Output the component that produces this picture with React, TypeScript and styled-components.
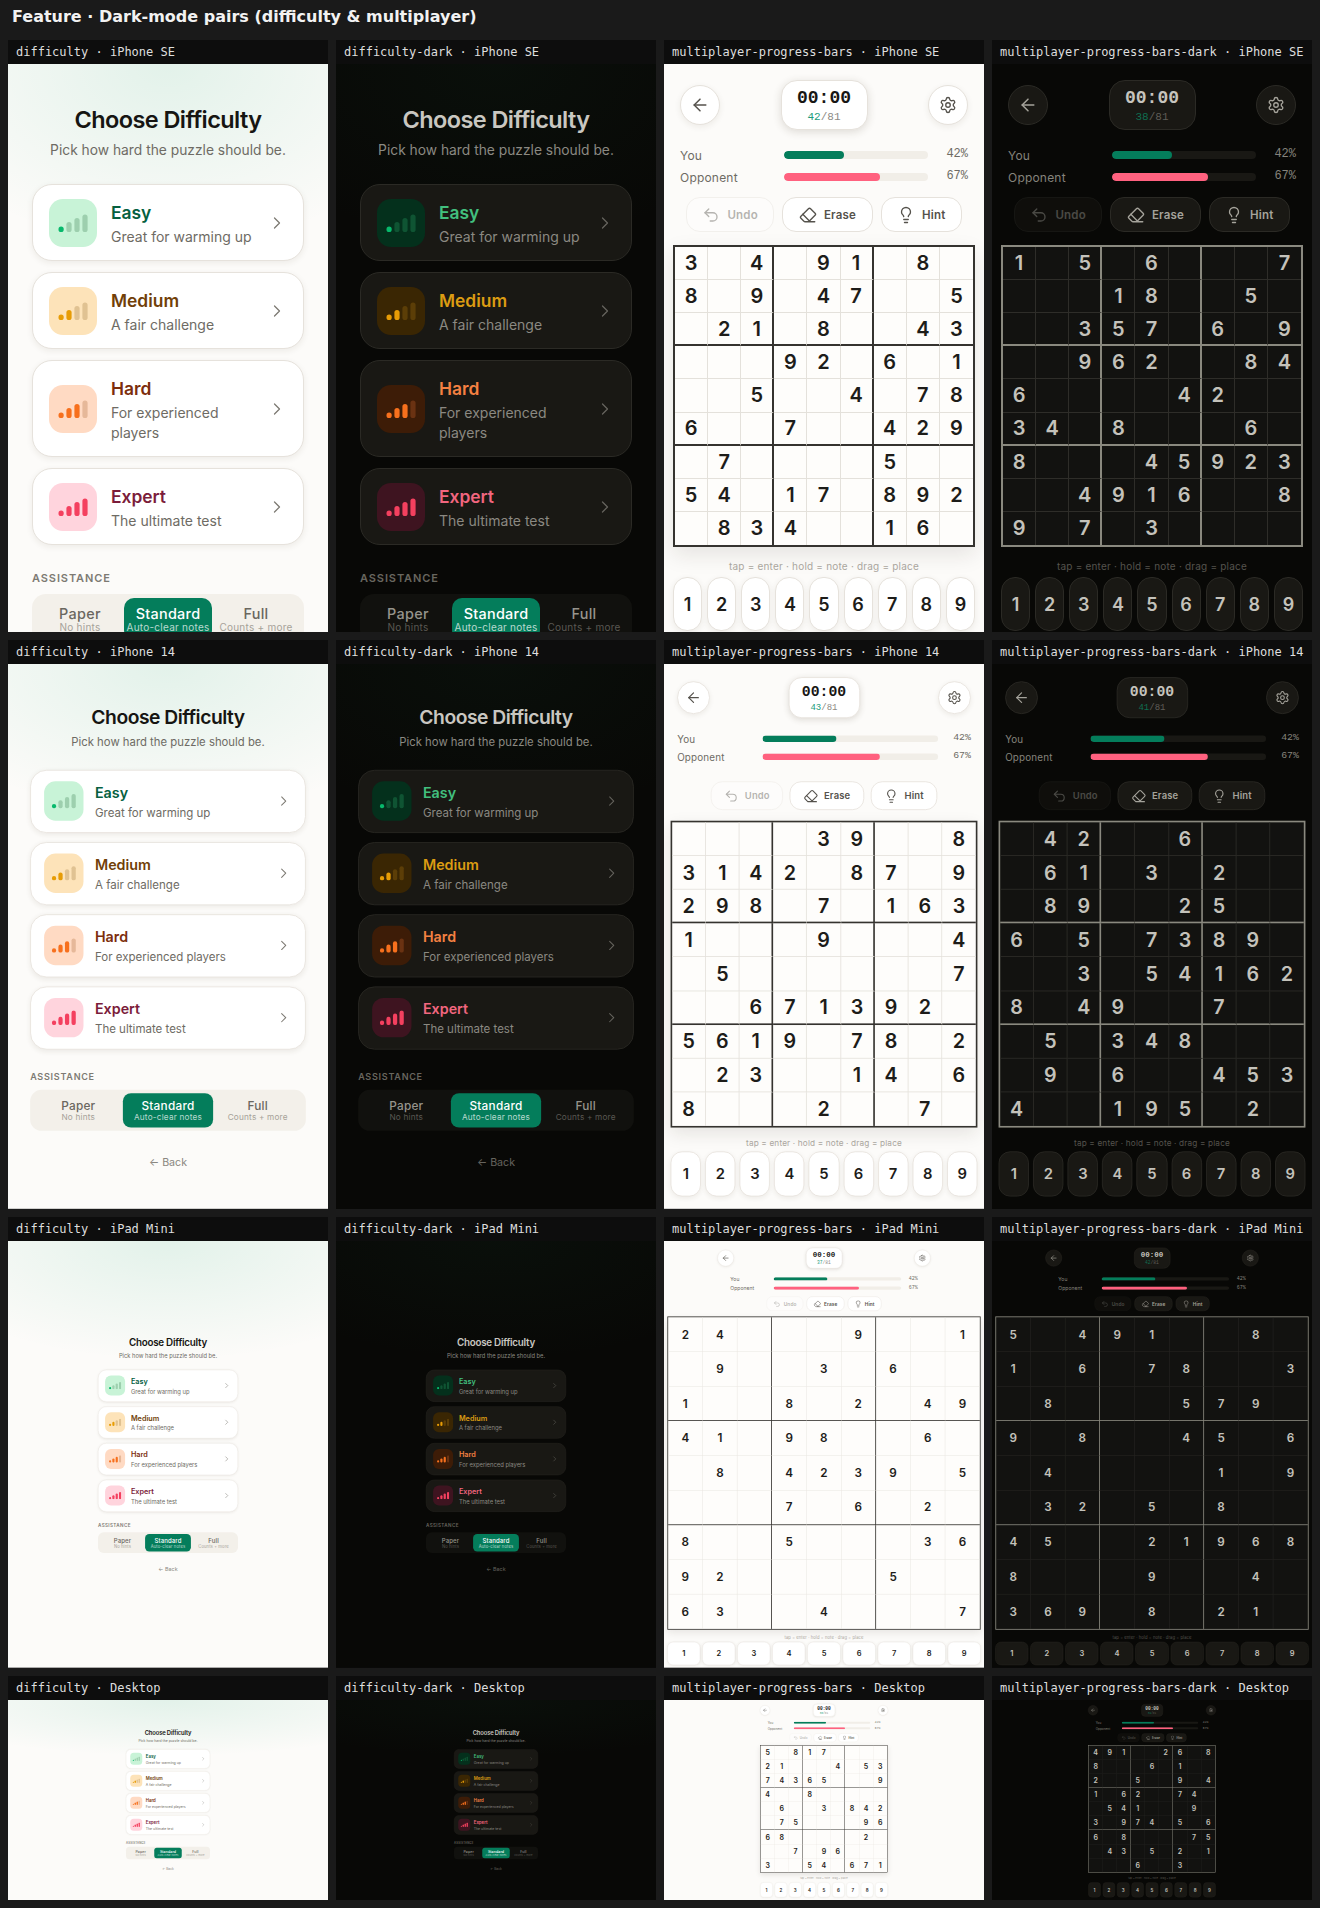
// Dark-mode pairs contact sheet: four screens, four device sizes
import * as React from 'react'
import styled, { createGlobalStyle, ThemeProvider } from 'styled-components'
import { ArrowLeft, ChevronRight, Eraser, Lightbulb, Settings, Undo2 } from 'lucide-react'

const SANS = `Inter, "Liberation Sans", sans-serif`
const MONO = `"Liberation Mono", monospace`

const light = {
  page: '#fcfbf9',
  glow: 'rgba(0, 160, 100, 0.1)',
  title: '#161512',
  sub: '#6e6b64',
  card: '#ffffff',
  line: '#e6e2dc',
  cardShadow: '0 2px 6px rgba(60, 50, 30, 0.08)',
  timerShadow: '0 2px 8px rgba(60, 50, 30, 0.16)',
  chevron: '#7c7972',
  heading: '#7d7a73',
  seg: '#f3f0ea',
  segText: '#6a675f',
  segSub: '#a6a299',
  back: '#8a8780',
  btnText: '#55524c',
  timer: '#171614',
  countDone: '#1c9c7c',
  countAll: '#8d8a84',
  track: '#f1eee8',
  label: '#6e6b64',
  pct: '#6e6b64',
  gridBorder: '#35332f',
  gridLine: '#e4e1db',
  cell: '#fefdfb',
  digit: '#1d1c19',
  gridShadow: '0 8px 20px rgba(40, 30, 20, 0.1)',
  hint: '#aaa69e',
}

const dark = {
  page: '#080806',
  glow: 'rgba(30, 110, 70, 0.07)',
  title: '#c9c7c1',
  sub: '#8b8982',
  card: '#191814',
  line: '#2b2a25',
  cardShadow: 'none',
  timerShadow: 'none',
  chevron: '#66645e',
  heading: '#68665f',
  seg: '#11110e',
  segText: '#96948c',
  segSub: '#5a5852',
  back: '#66645e',
  btnText: '#a5a39b',
  timer: '#c6c4be',
  countDone: '#0f6e50',
  countAll: '#5f5d57',
  track: '#191814',
  label: '#85837c',
  pct: '#85837c',
  gridBorder: '#8a897f',
  gridLine: '#2e2d29',
  cell: '#121210',
  digit: '#c4c2bb',
  gridShadow: 'none',
  hint: '#55534d',
}

const LEVELS = {
  light: [
    { name: 'Easy', sub: 'Great for warming up', ink: '#05603f', tile: '#c8f3d7', bar: '#07b96c', faded: '#9dcfae', on: 1 },
    { name: 'Medium', sub: 'A fair challenge', ink: '#713f08', tile: '#fde3b9', bar: '#e79c05', faded: '#e0c292', on: 2 },
    { name: 'Hard', sub: 'For experienced players', ink: '#7c2d0c', tile: '#ffdac3', bar: '#f7701d', faded: '#e6b899', on: 3 },
    { name: 'Expert', sub: 'The ultimate test', ink: '#7b1c3a', tile: '#ffd4dd', bar: '#f4405f', faded: '#f4405f', on: 4 },
  ],
  dark: [
    { name: 'Easy', sub: 'Great for warming up', ink: '#42bf7e', tile: '#04301c', bar: '#07b96c', faded: '#0f5433', on: 1 },
    { name: 'Medium', sub: 'A fair challenge', ink: '#dc9c12', tile: '#3a2603', bar: '#e79c05', faded: '#5c3e07', on: 2 },
    { name: 'Hard', sub: 'For experienced players', ink: '#f58142', tile: '#3d1c07', bar: '#f7701d', faded: '#6a3212', on: 3 },
    { name: 'Expert', sub: 'The ultimate test', ink: '#f2667f', tile: '#3e1420', bar: '#f4405f', faded: '#f4405f', on: 4 },
  ],
}

const DEVICES = [
  {
    name: 'iPhone SE', w: 320, h: 568, actionsGap: 13, board: 302, digit: 20, padGap: 5, padHeight: 54, padTop: 4,
    puzzles: {
      light: ['3.4.91.8.', '8.9.47..5', '.21.8..43', '...92.6.1', '..5..4.78', '6..7..429', '.7....5..', '54.17.892', '.834..16.'],
      dark: ['1.5.6...7', '...18..5.', '..357.6.9', '..962..84', '6....42..', '34.8...6.', '8...45923', '..4916..8', '9.7.3....'],
    },
  },
  {
    name: 'iPhone 14', w: 390, h: 664, actionsGap: 23, board: 374, digit: 24, padGap: 5, padHeight: 55, padTop: 3,
    puzzles: {
      light: ['....39..8', '3142.87.9', '298.7.163', '1...9...4', '.5......7', '..671392.', '5619.78.2', '.23..14.6', '8...2..7.'],
      dark: ['.42..6...', '.61.3.2..', '.89..25..', '6.5.7389.', '..3.54162', '8.49..7..', '.5.348...', '.9.6..453', '4..195.2.'],
    },
  },
  {
    name: 'iPad Mini', w: 768, h: 1024, actionsGap: 13, board: 752, digit: 28, padGap: 5, padHeight: 56, padTop: 3,
    puzzles: {
      light: ['24...9..1', '.9..3.6..', '1..8.2.49', '41.98..6.', '.8.4239.5', '...7.6.2.', '8..5...36', '92....5..', '63..4...7'],
      dark: ['5.491..8.', '1.6.78..3', '.8...579.', '9.8..45.6', '.4....1.9', '.32.5.8..', '45..21968', '8...9..4.', '369.8.21.'],
    },
  },
  {
    name: 'Desktop', w: 1280, h: 800, actionsGap: 13, board: 510, digit: 28, padGap: 8, padHeight: 60, padTop: 12,
    puzzles: {
      light: ['5.817....', '21...4.53', '74365...9', '4..8.....', '.6..3.842', '.75....96', '68.....2.', '..7.96...', '3..54.671'],
      dark: ['491..26.8', '8...6.1..', '2..5..9.4', '1.62..74.', '.541...9.', '3.974.5.6', '6.8....75', '.43.5.2.1', '...6..3..'],
    },
  },
]

const TILES = [
  { id: 'difficulty', kind: 'difficulty', mode: 'light' },
  { id: 'difficulty-dark', kind: 'difficulty', mode: 'dark' },
  { id: 'multiplayer-progress-bars', kind: 'multiplayer', mode: 'light' },
  { id: 'multiplayer-progress-bars-dark', kind: 'multiplayer', mode: 'dark' },
] as const

type Device = (typeof DEVICES)[number]
type Mode = 'light' | 'dark'

const GlobalStyle = createGlobalStyle`
  html, body { margin: 0; padding: 0; background: #1a1a1a; }
  * { box-sizing: border-box; }
`

const Sheet = styled.div`
  width: 1320px;
  height: 1908px;
  overflow: hidden;
  background: #1a1a1a;
`

const SheetTitle = styled.h1`
  margin: 0;
  height: 40px;
  padding: 7px 12px 0;
  font: bold 16px/19px "DejaVu Sans", sans-serif;
  color: #f2f2f2;
`

const Matrix = styled.div`
  display: grid;
  grid-template-columns: repeat(4, 320px);
  gap: 8px;
  padding: 0 8px;
`

const Tile = styled.section`
  display: flex;
  flex-direction: column;
  background: #0d0d0d;
`

const TileLabel = styled.div`
  height: 24px;
  padding-left: 8px;
  font: 12px/24px "DejaVu Sans Mono", monospace;
  color: #dedede;
  white-space: nowrap;
`

const Viewport = styled.div<{ $h: number }>`
  width: 320px;
  height: ${p => p.$h}px;
  overflow: hidden;
`

const Screen = styled.div<{ $w: number; $h: number; $scale: number }>`
  width: ${p => p.$w}px;
  height: ${p => p.$h}px;
  transform: scale(${p => p.$scale});
  transform-origin: 0 0;
  overflow: hidden;
  font-family: ${SANS};
  background-color: ${p => p.theme.page};
`

/* difficulty screen */
const DifficultyPage = styled.div`
  min-height: 100%;
  display: flex;
  flex-direction: column;
  align-items: center;
  justify-content: center;
  padding: 39px 24px;
  background: radial-gradient(ellipse 85% 28% at 50% 0, ${p => p.theme.glow}, transparent);
`

const Column = styled.div`
  width: 100%;
  max-width: 336px;
  display: flex;
  flex-direction: column;
`

const PageTitle = styled.h2`
  margin: 0 0 3px;
  font-size: 23.5px;
  line-height: 34px;
  font-weight: 600;
  letter-spacing: -0.6px;
  text-align: center;
  color: ${p => p.theme.title};
`

const PageSub = styled.p`
  margin: 0 0 24px;
  font-size: 13.8px;
  line-height: 20px;
  text-align: center;
  white-space: nowrap;
  color: ${p => p.theme.sub};
`

const LevelList = styled.div`
  display: flex;
  flex-direction: column;
  gap: 11px;
`

const LevelCard = styled.div`
  min-height: 77px;
  display: flex;
  align-items: center;
  gap: 14px;
  padding: 13.5px 16px;
  border: 1px solid ${p => p.theme.line};
  border-radius: 20px;
  background: ${p => p.theme.card};
  box-shadow: ${p => p.theme.cardShadow};
`

const LevelIcon = styled.div<{ $bg: string }>`
  flex: none;
  width: 48px;
  height: 48px;
  display: flex;
  align-items: center;
  justify-content: center;
  border-radius: 14px;
  background: ${p => p.$bg};
`

const LevelText = styled.div`
  flex: 1;
  min-width: 0;
`

const LevelName = styled.div<{ $ink: string }>`
  padding-top: 3px;
  margin-bottom: 3px;
  font-size: 17.4px;
  line-height: 22px;
  font-weight: 600;
  color: ${p => p.$ink};
`

const LevelSub = styled.div`
  font-size: 14px;
  line-height: 20px;
  color: ${p => p.theme.sub};
`

const Chevron = styled(ChevronRight)`
  flex: none;
  margin-left: -2px;
  color: ${p => p.theme.chevron};
`

const SectionHeading = styled.div`
  margin: 24px 0 7px;
  font-size: 11px;
  line-height: 18px;
  font-weight: 600;
  letter-spacing: 0.9px;
  color: ${p => p.theme.heading};
`

const Segments = styled.div`
  height: 50px;
  padding: 4px;
  display: grid;
  grid-template-columns: repeat(3, 1fr);
  border-radius: 14px;
  background: ${p => p.theme.seg};
`

const Segment = styled.div<{ $active?: boolean }>`
  height: 42px;
  display: flex;
  flex-direction: column;
  align-items: center;
  justify-content: center;
  border-radius: 10px;
  background: ${p => (p.$active ? '#047d5b' : 'transparent')};
  white-space: nowrap;
`

const SegName = styled.div<{ $active?: boolean }>`
  font-size: 14.4px;
  line-height: 17px;
  font-weight: 500;
  letter-spacing: 0.3px;
  color: ${p => (p.$active ? '#ffffff' : p.theme.segText)};
`

const SegSub = styled.div<{ $active?: boolean }>`
  font-size: 10px;
  line-height: 11px;
  letter-spacing: 0.25px;
  color: ${p => (p.$active ? 'rgba(255,255,255,0.72)' : p.theme.segSub)};
`

const BackLink = styled.div`
  margin-top: 28px;
  font-size: 13px;
  line-height: 20px;
  text-align: center;
  color: ${p => p.theme.back};
`

/* multiplayer screen */
const GamePage = styled.div`
  height: 100%;
  padding-top: 16px;
  display: flex;
  flex-direction: column;
  align-items: center;
`

const GameHeader = styled.div`
  width: calc(100% - 32px);
  max-width: 512px;
  height: 50px;
  display: flex;
  align-items: center;
  justify-content: space-between;
`

const RoundButton = styled.div`
  width: 40px;
  height: 40px;
  display: flex;
  align-items: center;
  justify-content: center;
  border: 1px solid ${p => p.theme.line};
  border-radius: 50%;
  background: ${p => p.theme.card};
  color: ${p => p.theme.btnText};
  box-shadow: ${p => p.theme.cardShadow};
`

const TimerCard = styled.div`
  width: 87px;
  height: 50px;
  display: flex;
  flex-direction: column;
  align-items: center;
  justify-content: center;
  border: 1px solid ${p => p.theme.line};
  border-radius: 16px;
  background: ${p => p.theme.card};
  box-shadow: ${p => p.theme.timerShadow};
`

const TimerText = styled.div`
  font: bold 18px/22px ${MONO};
  color: ${p => p.theme.timer};
`

const TimerCount = styled.div`
  margin-top: 2px;
  font: 11px/13px ${MONO};
  color: ${p => p.theme.countAll};

  b {
    font-weight: 400;
    color: ${p => p.theme.countDone};
  }
`

const Progress = styled.div`
  width: calc(100% - 32px);
  max-width: 450px;
  margin-top: 18px;
  display: flex;
  flex-direction: column;
  gap: 8px;
`

const ProgressRow = styled.div`
  height: 14px;
  display: flex;
  align-items: center;
`

const ProgressName = styled.div`
  flex: none;
  width: 104px;
  font-size: 12px;
  letter-spacing: 0.2px;
  color: ${p => p.theme.label};
`

const Track = styled.div`
  flex: 1;
  height: 8px;
  border-radius: 4px;
  overflow: hidden;
  background: ${p => p.theme.track};
`

const Fill = styled.div<{ $color: string }>`
  height: 100%;
  border-radius: 4px;
  background: ${p => p.$color};
`

const ProgressPct = styled.div`
  flex: none;
  width: 40px;
  margin-top: -3px;
  text-align: right;
  font: 12px/14px ${MONO};
  color: ${p => p.theme.pct};
`

const Actions = styled.div<{ $gap: number }>`
  margin-top: ${p => p.$gap}px;
  display: flex;
  gap: 8px;
`

const ActionButton = styled.div<{ $disabled?: boolean }>`
  height: 35px;
  padding: 0 15.5px;
  display: flex;
  align-items: center;
  gap: 7px;
  border: 1px solid ${p => p.theme.line};
  border-radius: 14px;
  background: ${p => p.theme.card};
  font-size: 11.5px;
  font-weight: 600;
  letter-spacing: 0.2px;
  color: ${p => p.theme.btnText};
  opacity: ${p => (p.$disabled ? 0.42 : 1)};
`

const Board = styled.div<{ $size: number }>`
  margin-top: 13px;
  width: ${p => p.$size}px;
  height: ${p => p.$size}px;
  display: grid;
  grid-template-columns: repeat(9, 1fr);
  grid-template-rows: repeat(9, 1fr);
  border: 2px solid ${p => p.theme.gridBorder};
  background: ${p => p.theme.cell};
  box-shadow: ${p => p.theme.gridShadow};
`

const Cell = styled.div<{ $r: number; $c: number; $size: number }>`
  display: flex;
  align-items: center;
  justify-content: center;
  font-size: ${p => p.$size}px;
  font-weight: 600;
  color: ${p => p.theme.digit};
  border-right: ${p => (p.$c === 8 ? 'none' : p.$c % 3 === 2 ? `2px solid ${p.theme.gridBorder}` : `1px solid ${p.theme.gridLine}`)};
  border-bottom: ${p => (p.$r === 8 ? 'none' : p.$r % 3 === 2 ? `2px solid ${p.theme.gridBorder}` : `1px solid ${p.theme.gridLine}`)};
`

const HintLine = styled.div`
  margin-top: 12px;
  font-size: 10px;
  line-height: 14px;
  letter-spacing: 0.2px;
  white-space: nowrap;
  color: ${p => p.theme.hint};
`

const NumberPad = styled.div<{ $size: number; $gap: number; $top: number }>`
  margin-top: ${p => p.$top}px;
  width: ${p => p.$size}px;
  display: grid;
  grid-template-columns: repeat(9, 1fr);
  gap: ${p => p.$gap}px;
`

const PadKey = styled.div<{ $h: number }>`
  height: ${p => p.$h}px;
  display: flex;
  align-items: center;
  justify-content: center;
  border: 1px solid ${p => p.theme.line};
  border-radius: 14px;
  background: ${p => p.theme.card};
  box-shadow: ${p => p.theme.cardShadow};
  font-size: 18px;
  font-weight: 600;
  color: ${p => p.theme.digit};
`

// each level is a tiny signal meter, the filled bars show how hard it is
const SignalBars = ({ on, bar, faded }: { on: number; bar: string; faded: string }) => (
  <svg width="30" height="18" viewBox="0 0 30 18">
    <rect x="0.5" y="12.5" width="5.2" height="5.5" rx="2.6" fill={on >= 1 ? bar : faded} />
    <rect x="8.4" y="8" width="5.2" height="10" rx="2.6" fill={on >= 2 ? bar : faded} />
    <rect x="16.4" y="4" width="5.2" height="14" rx="2.6" fill={on >= 3 ? bar : faded} />
    <rect x="24.4" y="0.4" width="5.2" height="17.6" rx="2.6" fill={on >= 4 ? bar : faded} />
  </svg>
)

const DifficultyScreen = ({ mode }: { mode: Mode }) => (
  <DifficultyPage>
    <Column>
      <PageTitle>Choose Difficulty</PageTitle>
      <PageSub>Pick how hard the puzzle should be.</PageSub>
      <LevelList>
        {LEVELS[mode].map(l => (
          <LevelCard key={l.name}>
            <LevelIcon $bg={l.tile}>
              <SignalBars on={l.on} bar={l.bar} faded={l.faded} />
            </LevelIcon>
            <LevelText>
              <LevelName $ink={l.ink}>{l.name}</LevelName>
              <LevelSub>{l.sub}</LevelSub>
            </LevelText>
            <Chevron size={20} strokeWidth={1.5} />
          </LevelCard>
        ))}
      </LevelList>
      <SectionHeading>ASSISTANCE</SectionHeading>
      <Segments>
        <Segment>
          <SegName>Paper</SegName>
          <SegSub>No hints</SegSub>
        </Segment>
        <Segment $active>
          <SegName $active>Standard</SegName>
          <SegSub $active>Auto-clear notes</SegSub>
        </Segment>
        <Segment>
          <SegName>Full</SegName>
          <SegSub>Counts + more</SegSub>
        </Segment>
      </Segments>
      <BackLink>← Back</BackLink>
    </Column>
  </DifficultyPage>
)

const GameScreen = ({ mode, device }: { mode: Mode; device: Device }) => {
  const puzzle = device.puzzles[mode].join('')
  const filled = puzzle.replace(/\./g, '').length

  return (
    <GamePage>
      <GameHeader>
        <RoundButton>
          <ArrowLeft size={20} strokeWidth={1.8} />
        </RoundButton>
        <TimerCard>
          <TimerText>00:00</TimerText>
          <TimerCount>
            <b>{filled}</b>/81
          </TimerCount>
        </TimerCard>
        <RoundButton>
          <Settings size={18} strokeWidth={1.8} />
        </RoundButton>
      </GameHeader>
      <Progress>
        <ProgressRow>
          <ProgressName>You</ProgressName>
          <Track>
            <Fill $color="#047d5b" style={{ width: '42%' }} />
          </Track>
          <ProgressPct>42%</ProgressPct>
        </ProgressRow>
        <ProgressRow>
          <ProgressName>Opponent</ProgressName>
          <Track>
            <Fill $color="#ff617f" style={{ width: '67%' }} />
          </Track>
          <ProgressPct>67%</ProgressPct>
        </ProgressRow>
      </Progress>
      <Actions $gap={device.actionsGap}>
        <ActionButton $disabled>
          <Undo2 size={18} strokeWidth={1.8} />
          Undo
        </ActionButton>
        <ActionButton>
          <Eraser size={18} strokeWidth={1.8} />
          Erase
        </ActionButton>
        <ActionButton>
          <Lightbulb size={18} strokeWidth={1.8} />
          Hint
        </ActionButton>
      </Actions>
      <Board $size={device.board}>
        {puzzle.split('').map((d, i) => (
          <Cell key={i} $r={Math.floor(i / 9)} $c={i % 9} $size={device.digit}>
            {d === '.' ? '' : d}
          </Cell>
        ))}
      </Board>
      <HintLine>tap = enter · hold = note · drag = place</HintLine>
      <NumberPad $size={device.board} $gap={device.padGap} $top={device.padTop}>
        {[1, 2, 3, 4, 5, 6, 7, 8, 9].map(n => (
          <PadKey key={n} $h={device.padHeight}>
            {n}
          </PadKey>
        ))}
      </NumberPad>
    </GamePage>
  )
}

export default function App() {
  return (
    <Sheet>
      <GlobalStyle />
      <SheetTitle>Feature · Dark-mode pairs (difficulty &amp; multiplayer)</SheetTitle>
      <Matrix>
        {DEVICES.map(device =>
          TILES.map(tile => {
            const scale = 320 / device.w

            return (
              <ThemeProvider key={tile.id + device.name} theme={tile.mode === 'dark' ? dark : light}>
                <Tile>
                  <TileLabel>
                    {tile.id} · {device.name}
                  </TileLabel>
                  <Viewport $h={Math.ceil(device.h * scale)}>
                    <Screen $w={device.w} $h={device.h} $scale={scale}>
                      {tile.kind === 'difficulty' ? (
                        <DifficultyScreen mode={tile.mode} />
                      ) : (
                        <GameScreen mode={tile.mode} device={device} />
                      )}
                    </Screen>
                  </Viewport>
                </Tile>
              </ThemeProvider>
            )
          }),
        )}
      </Matrix>
    </Sheet>
  )
}
